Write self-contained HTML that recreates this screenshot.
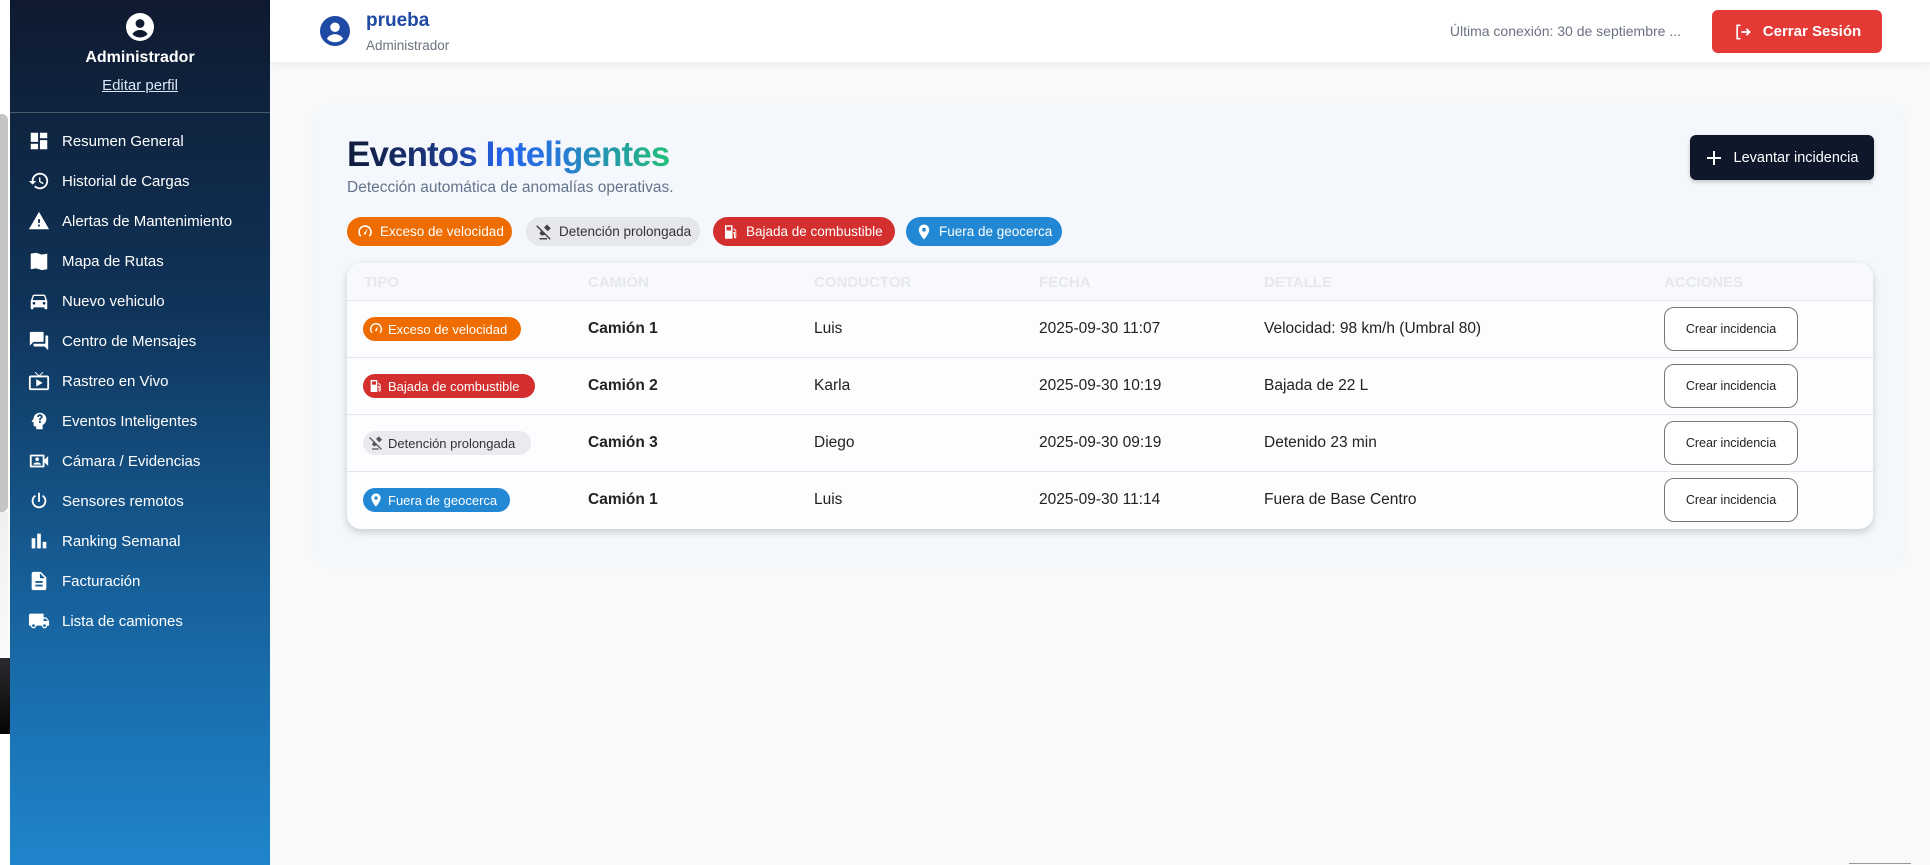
<!DOCTYPE html>
<html><head><meta charset="utf-8">
<style>
*{box-sizing:border-box;margin:0;padding:0}
body{width:1930px;height:865px;overflow:hidden;background:#f8f9fb;font-family:"Liberation Sans",sans-serif;position:relative}
.strip{position:absolute;left:0;top:0;width:10px;height:865px;background:#fff}
.strip .g{position:absolute;left:0;top:114px;width:8px;height:398px;background:#c4c4c4;border-radius:0 6px 6px 0}
.strip .w{position:absolute;left:0;top:512px;width:8px;height:146px;background:linear-gradient(#f0f0f0,#fafafa);border-radius:0 0 6px 0}
.strip .d{position:absolute;left:0;top:658px;width:10px;height:76px;background:linear-gradient(#2a2a2e,#050505)}
.side{position:absolute;left:10px;top:0;width:260px;height:865px;background:linear-gradient(180deg,#0f1a30 0%,#0f3358 35%,#17629d 70%,#1f85cc 100%);color:#fff}
.side .top{height:113px;border-bottom:1px solid rgba(255,255,255,.25);text-align:center}
.side .top svg{position:absolute;left:116px;top:13px}
.side .adm{position:absolute;left:0;width:260px;top:49px;font-weight:bold;font-size:16px;text-align:center}
.side .ed{position:absolute;left:0;width:260px;top:77px;font-size:15px;text-align:center;text-decoration:underline;color:#dbe7f5}
.mi{position:absolute;left:0;height:40px;width:260px;font-size:15px;display:flex;align-items:center}
.mi svg{position:absolute;left:18px;width:22px;height:22px;fill:#fff}
.mi span{position:absolute;left:52px}
.hdr{position:absolute;left:270px;top:0;width:1660px;height:62px;background:#fff;box-shadow:0 2px 6px rgba(0,0,0,.07)}
.hdr .nm{position:absolute;left:96px;top:10px;font-weight:bold;font-size:19px;color:#1e4aa5}
.hdr .rl{position:absolute;left:96px;top:38px;font-size:13.5px;color:#6b7280}
.hdr .lc{position:absolute;right:249px;top:23px;font-size:14px;color:#6b7280}
.hdr .out{position:absolute;left:1442px;top:10px;width:170px;height:43px;background:#e53935;border-radius:6px;color:#fff;font-weight:bold;font-size:15px;display:flex;align-items:center;justify-content:center;gap:10px}
.card{position:absolute;left:314px;top:108px;width:1590px;height:456px;background:#f4f7fc;border-radius:14px;box-shadow:0 0 8px rgba(0,0,0,.03)}
.tt{position:absolute;left:33px;top:27px;font-size:35px;font-weight:bold;letter-spacing:-0.9px;background:linear-gradient(90deg,#0f1b3a 0%,#1e3a8a 32%,#2563eb 48%,#2878d8 65%,#22c07a 100%);-webkit-background-clip:text;background-clip:text;color:transparent}
.sub{position:absolute;left:33px;top:71px;font-size:15.5px;color:#64748b}
.lev{position:absolute;left:1376px;top:27px;width:184px;height:45px;background:#0f172a;border-radius:6px;color:#fff;font-size:14.5px;display:flex;align-items:center;justify-content:center;gap:12px;box-shadow:0 2px 4px rgba(0,0,0,.2)}
.chip{position:absolute;height:29px;border-radius:15px;display:flex;align-items:center;padding-left:9px;font-size:13.5px;gap:6px;color:#fff}
.chip svg{width:18px;height:18px;fill:#fff}
.o{background:#ef6c00}.gr{background:#e5e7eb;color:#333}.gr svg{fill:#444}.r{background:#d32f2f}.b{background:#2288d4}
.tbl{position:absolute;left:33px;top:155px;width:1526px;height:266px;background:#fff;border-radius:14px;box-shadow:0 3px 8px rgba(0,0,0,.18);overflow:hidden}
.th{position:absolute;top:0;left:0;width:100%;height:37px;background:#f7f9fc}
.th div{position:absolute;top:11px;font-size:15px;font-weight:bold;color:#e6e8ec}
.row{position:absolute;left:0;width:100%;height:57px;border-top:1px solid #e2e4e8;background:#fcfdfe}
.row div{position:absolute;top:19px;font-size:15.5px;color:#222}
.row .c2{font-weight:bold}
.row .tc{position:absolute;top:16px;left:16px;height:24px;border-radius:12px;display:flex;align-items:center;padding:0 8px 0 5px;gap:4px;font-size:13px;color:#fff}
.row .tc svg{width:16px;height:16px;fill:#fff}
.row .tc.gr{color:#333}.row .tc.gr svg{fill:#555}
.btn{position:absolute;left:1317px;top:6px !important;width:134px;height:44px;border:1px solid #777;border-radius:10px;background:#fff;font-size:12.5px !important;display:flex;align-items:center;justify-content:center}
</style></head><body>
<div class="strip"><div class="g"></div><div class="w"></div><div class="d"></div></div>
<div class="side">
 <div class="top">
  <svg width="28" height="28" viewBox="0 0 24 24"><circle cx="12" cy="12" r="12" fill="#fff"/><circle cx="12" cy="9" r="3.8" fill="#0f1a30"/><path d="M5.5 18.2c1.5-2.6 4-3.6 6.5-3.6s5 1 6.5 3.6A9 9 0 0 1 12 21a9 9 0 0 1-6.5-2.8z" fill="#0f1a30"/></svg>
  <div class="adm">Administrador</div>
  <div class="ed">Editar perfil</div>
 </div>
 <div class="mi" style="top:121px"><svg viewBox="0 0 24 24"><path d="M3 13h8V3H3v10zm0 8h8v-6H3v6zm10 0h8V11h-8v10zm0-18v6h8V3h-8z"/></svg><span>Resumen General</span></div>
 <div class="mi" style="top:161px"><svg viewBox="0 0 24 24"><path d="M13 3a9 9 0 0 0-9 9H1l4 4 4-4H6a7 7 0 1 1 2.05 4.950l-1.42 1.42A9 9 0 1 0 13 3zm-1 5v5l4.25 2.52.77-1.28-3.52-2.09V8z"/></svg><span>Historial de Cargas</span></div>
 <div class="mi" style="top:201px"><svg viewBox="0 0 24 24"><path d="M1 21h22L12 2 1 21zm12-3h-2v-2h2v2zm0-4h-2v-4h2v4z"/></svg><span>Alertas de Mantenimiento</span></div>
 <div class="mi" style="top:241px"><svg viewBox="0 0 24 24"><path d="M3 4l6-1 6 2 6-1v17l-6 1-6-2-6 1z"/></svg><span>Mapa de Rutas</span></div>
 <div class="mi" style="top:281px"><svg viewBox="0 0 24 24"><path d="M18.9 6c-.2-.6-.8-1-1.4-1h-11c-.7 0-1.2.4-1.4 1L3 12v8c0 .6.4 1 1 1h1c.6 0 1-.4 1-1v-1h12v1c0 .6.4 1 1 1h1c.6 0 1-.4 1-1v-8l-2.1-6zM6.5 16a1.5 1.5 0 1 1 0-3 1.5 1.5 0 0 1 0 3zm11 0a1.5 1.5 0 1 1 0-3 1.5 1.5 0 0 1 0 3zM5 11l1.5-4.5h11L19 11H5z"/></svg><span>Nuevo vehiculo</span></div>
 <div class="mi" style="top:321px"><svg viewBox="0 0 24 24"><path d="M21 6h-2v9H6v2c0 .6.4 1 1 1h11l4 4V7c0-.6-.4-1-1-1zm-4 6V3c0-.6-.4-1-1-1H3c-.6 0-1 .4-1 1v14l4-4h10c.6 0 1-.4 1-1z"/></svg><span>Centro de Mensajes</span></div>
 <div class="mi" style="top:361px"><svg viewBox="0 0 24 24"><path d="M21 6h-7.6l3.3-3.3-.7-.7L12 5.8 8 2l-.7.7L10.6 6H3c-1.1 0-2 .9-2 2v12c0 1.1.9 2 2 2h18c1.1 0 2-.9 2-2V8c0-1.1-.9-2-2-2zm0 14H3V8h18v12zM9 10v8l7-4z"/></svg><span>Rastreo en Vivo</span></div>
 <div class="mi" style="top:401px"><svg viewBox="0 0 24 24"><path d="M13 3C9.2 3 6.1 5.9 6 9.7L4.1 12.2c-.2.3 0 .8.4.8H6v3c0 1.1.9 2 2 2h1v3h7v-4.7c2.4-1.1 4-3.5 4-6.300 0-3.9-3.1-7-7-7zm1 11h-2v-2h2v2zm1.3-5.2c-.3.4-.6.7-1 .9-.2.2-.3.5-.3 1.3h-2c0-1.2.4-1.8 1-2.2.6-.4.9-.7.9-1.2 0-.6-.4-1-1-1s-1 .4-1 1H10c0-1.7 1.3-3 3-3s3 1.3 3 3c0 .5-.2 1-.7 1.4z"/></svg><span>Eventos Inteligentes</span></div>
 <div class="mi" style="top:441px"><svg viewBox="0 0 24 24"><path d="M18 10.5V6c0-.6-.4-1-1-1H3c-.6 0-1 .4-1 1v12c0 .6.4 1 1 1h14c.6 0 1-.4 1-1v-4.5l4 4v-11l-4 4zM16 17H4V7h12v10zm-6-5a2 2 0 1 0 0-4 2 2 0 0 0 0 4zm4 3.5c0-1.3-2.7-2-4-2s-4 .7-4 2v.5h8z"/></svg><span>Cámara / Evidencias</span></div>
 <div class="mi" style="top:481px"><svg viewBox="0 0 24 24"><path d="M11 3h2v10h-2zM16.6 5.4l-1.4 1.4A6 6 0 1 1 8.8 6.8L7.4 5.4A8 8 0 1 0 16.6 5.4z"/></svg><span>Sensores remotos</span></div>
 <div class="mi" style="top:521px"><svg viewBox="0 0 24 24"><path d="M4 9h4v11H4zm6-5h4v16h-4zm6 9h4v7h-4z"/></svg><span>Ranking Semanal</span></div>
 <div class="mi" style="top:561px"><svg viewBox="0 0 24 24"><path d="M14 2H6c-1.1 0-2 .9-2 2v16c0 1.1.9 2 2 2h12c1.1 0 2-.9 2-2V8l-6-6zm2 16H8v-2h8v2zm0-4H8v-2h8v2zm-3-5V3.5L18.5 9H13z"/></svg><span>Facturación</span></div>
 <div class="mi" style="top:601px"><svg viewBox="0 0 24 24"><path d="M20 8h-3V4H3c-1.1 0-2 .9-2 2v11h2a3 3 0 0 0 6 0h6a3 3 0 0 0 6 0h2v-5l-3-4zM6 18.5a1.5 1.5 0 1 1 0-3 1.5 1.5 0 0 1 0 3zm13.5-9l2 2.5H17V9.5h2.5zM18 18.5a1.5 1.5 0 1 1 0-3 1.5 1.5 0 0 1 0 3z"/></svg><span>Lista de camiones</span></div>
</div>
<div class="hdr">
 <svg style="position:absolute;left:50px;top:16px" width="30" height="30" viewBox="0 0 24 24"><circle cx="12" cy="12" r="12" fill="#1e4aa5"/><circle cx="12" cy="9" r="3.8" fill="#fff"/><path d="M5.5 18.2c1.5-2.6 4-3.6 6.5-3.6s5 1 6.5 3.6A9 9 0 0 1 12 21a9 9 0 0 1-6.5-2.8z" fill="#fff"/></svg>
 <div class="nm">prueba</div>
 <div class="rl">Administrador</div>
 <div class="lc">Última conexión: 30 de septiembre ...</div>
 <div class="out"><svg width="20" height="20" viewBox="0 0 24 24" fill="none" stroke="#fff" stroke-width="2"><path d="M9 4H5v16h4M10 12h10M16 8l4 4-4 4"/></svg>Cerrar Sesión</div>
</div>
<div class="card">
 <div class="tt">Eventos Inteligentes</div>
 <div class="sub">Detección automática de anomalías operativas.</div>
 <div class="lev"><svg width="16" height="16" viewBox="0 0 16 16" stroke="#fff" stroke-width="2"><path d="M8 1v14M1 8h14"/></svg>Levantar incidencia</div>
 <div class="chip o" style="left:33px;top:109px;width:165px"><svg viewBox="0 0 24 24"><path d="M12 3a9 9 0 0 0-9 9c0 2.5 1 4.7 2.6 6.3L7 17A7 7 0 1 1 17 17l1.4 1.4A9 9 0 0 0 12 3zm3.5 4.5l-4 5a1.5 1.5 0 1 0 2 1z"/></svg>Exceso de velocidad</div>
 <div class="chip gr" style="left:212px;top:109px;width:174px"><svg viewBox="0 0 24 24"><path d="M3 3l18 18-1.4 1.4L1.6 4.4zM6 20h10v2H6zm6-14l4-4 5 5-4 4zM9 9l6 6-6 2-3-3z"/></svg>Detención prolongada</div>
 <div class="chip r" style="left:399px;top:109px;width:182px"><svg viewBox="0 0 24 24"><path d="M4 3h10v18H4zm2 2v5h6V5zm10 2l3 3v9a1.5 1.5 0 0 1-3 0v-5h-1v-2h2.5v7h.5v-8l-3-3z"/></svg>Bajada de combustible</div>
 <div class="chip b" style="left:592px;top:109px;width:156px"><svg viewBox="0 0 24 24"><path d="M12 2a7 7 0 0 0-7 7c0 5.2 7 13 7 13s7-7.8 7-13a7 7 0 0 0-7-7zm0 9.5a2.5 2.5 0 1 1 0-5 2.5 2.5 0 0 1 0 5z"/></svg>Fuera de geocerca</div>
 <div class="tbl">
  <div class="th"><div style="left:17px">TIPO</div><div style="left:241px">CAMIÓN</div><div style="left:467px">CONDUCTOR</div><div style="left:692px">FECHA</div><div style="left:917px">DETALLE</div><div style="left:1317px">ACCIONES</div></div>
  <div class="row" style="top:37px"><span class="tc o" style="width:158px"><svg viewBox="0 0 24 24"><path d="M12 3a9 9 0 0 0-9 9c0 2.5 1 4.7 2.6 6.3L7 17A7 7 0 1 1 17 17l1.4 1.4A9 9 0 0 0 12 3zm3.5 4.5l-4 5a1.5 1.5 0 1 0 2 1z"/></svg>Exceso de velocidad</span><div class="c2" style="left:241px">Camión 1</div><div style="left:467px">Luis</div><div style="left:692px">2025-09-30 11:07</div><div style="left:917px">Velocidad: 98 km/h (Umbral 80)</div><div class="btn">Crear incidencia</div></div>
  <div class="row" style="top:94px"><span class="tc r" style="width:172px"><svg viewBox="0 0 24 24"><path d="M4 3h10v18H4zm2 2v5h6V5zm10 2l3 3v9a1.5 1.5 0 0 1-3 0v-5h-1v-2h2.5v7h.5v-8l-3-3z"/></svg>Bajada de combustible</span><div class="c2" style="left:241px">Camión 2</div><div style="left:467px">Karla</div><div style="left:692px">2025-09-30 10:19</div><div style="left:917px">Bajada de 22 L</div><div class="btn">Crear incidencia</div></div>
  <div class="row" style="top:151px"><span class="tc gr" style="width:168px;background:#e9ebee"><svg viewBox="0 0 24 24"><path d="M3 3l18 18-1.4 1.4L1.6 4.4zM6 20h10v2H6zm6-14l4-4 5 5-4 4zM9 9l6 6-6 2-3-3z"/></svg>Detención prolongada</span><div class="c2" style="left:241px">Camión 3</div><div style="left:467px">Diego</div><div style="left:692px">2025-09-30 09:19</div><div style="left:917px">Detenido 23 min</div><div class="btn">Crear incidencia</div></div>
  <div class="row" style="top:208px"><span class="tc b" style="width:147px"><svg viewBox="0 0 24 24"><path d="M12 2a7 7 0 0 0-7 7c0 5.2 7 13 7 13s7-7.8 7-13a7 7 0 0 0-7-7zm0 9.5a2.5 2.5 0 1 1 0-5 2.5 2.5 0 0 1 0 5z"/></svg>Fuera de geocerca</span><div class="c2" style="left:241px">Camión 1</div><div style="left:467px">Luis</div><div style="left:692px">2025-09-30 11:14</div><div style="left:917px">Fuera de Base Centro</div><div class="btn">Crear incidencia</div></div>
 </div>
</div>
<div style="position:absolute;left:1849px;top:863px;width:62px;height:2px;border-top:1px solid #999"></div>
</body></html>
